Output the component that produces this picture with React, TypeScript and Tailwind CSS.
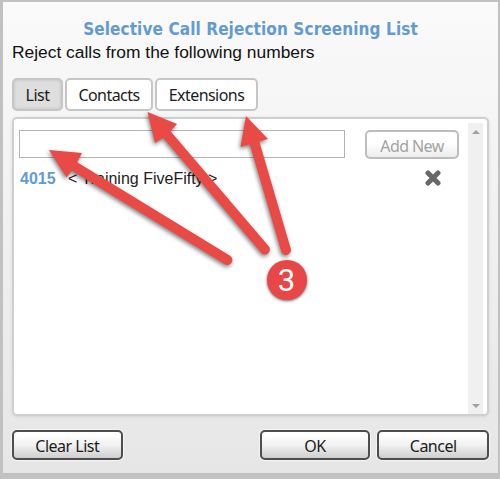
import React from "react";

const UI = "font-['Noto_Sans','Open_Sans',sans-serif]";

function Tab({ label, className }: { label: string; className: string }) {
  return (
    <button
      className={`${UI} flex h-[33px] items-center justify-center rounded-[5px] border-2 border-[#c6c6c6] pt-px text-[16px] leading-none tracking-[-0.55px] whitespace-nowrap text-[#1c1c1c] ${className}`}
    >
      {label}
    </button>
  );
}

function ActionButton({ label, className }: { label: string; className: string }) {
  return (
    <button
      className={`${UI} flex h-[30px] items-center justify-center rounded-[5px] border-2 border-[#4d4d4d] bg-linear-to-b from-white from-10% via-[#f1f1f1] via-50% to-[#cfcfcf] pt-px text-[16px] leading-none tracking-[-0.5px] whitespace-nowrap text-[#1c1c1c] shadow-[0_0_1px_1px_#f5f5f5] ${className}`}
    >
      {label}
    </button>
  );
}

const arrows = [
  { head: "49,150 82,153 77.5,161.5 71.5,171 66.5,177.5", x1: 73, y1: 165.5, x2: 227.5, y2: 260 },
  { head: "147.5,112 177,124 171,130.5 163,138 155,143", x1: 166, y1: 133.5, x2: 265, y2: 249.5 },
  { head: "246,116 268,139 259,141.5 251,144 240.5,147", x1: 254, y1: 141, x2: 286, y2: 250 },
];

function Annotations() {
  return (
    <svg className="pointer-events-none absolute inset-0" width="500" height="479" viewBox="0 0 500 479">
      {arrows.map((a) => (
        <g key={a.head} className="fill-[#e94a45] stroke-[#e94a45] drop-shadow-[-1px_2px_2px_rgba(0,0,0,0.5)]">
          <polygon points={a.head} stroke="none" />
          <line x1={a.x1} y1={a.y1} x2={a.x2} y2={a.y2} strokeWidth="9.8" strokeLinecap="round" />
        </g>
      ))}
    </svg>
  );
}

export default function App() {
  return (
    <div className="relative h-[479px] w-[500px] overflow-hidden bg-[#c1c1c1] pt-[2px] pr-[2px] pb-[6px] pl-[3px]">
      <div className="flex h-[471px] flex-col bg-linear-to-b from-[#fafafa] to-[#e6e6e6] pr-[9px] pl-[9px]">
        <h1 className="mt-[16px] flex h-[22px] items-center justify-center pt-px font-['DejaVu_Sans_Condensed','DejaVu_Sans','Noto_Sans',sans-serif] text-[17px] leading-none font-bold tracking-[0.1px] whitespace-nowrap text-[#639bd1]">
          Selective Call Rejection Screening List
        </h1>
        <p className="flex h-[24px] items-center pt-[2px] font-['Liberation_Sans',Arial,sans-serif] text-[17.4px] leading-none whitespace-nowrap text-[#111]">
          Reject calls from the following numbers
        </p>
        <div className="mt-[14px] flex h-[33px] gap-[2px]">
          <Tab label="List" className="w-[51px] bg-[#dedede] shadow-[inset_0_0_3px_#bbb]" />
          <Tab label="Contacts" className="w-[88px] bg-white" />
          <Tab label="Extensions" className="w-[103px] bg-white" />
        </div>
        <div className="mt-[6px] flex h-[299px] w-[477px] rounded-[5px] border-2 border-[#cfcfcf] bg-white shadow-[0_1px_3px_#d4d4d4]">
          <div className="flex-1 pl-[5px]">
            <div className="mt-[11px] flex items-start">
              <input className="h-[28px] w-[326px] border border-[#b5b5b5] bg-white" />
              <button
                className={`${UI} ml-[20px] flex h-[29px] w-[94px] items-center justify-center rounded-[5px] border-2 border-[#bdbdbd] bg-linear-to-b from-white from-45% to-[#ececec] pt-[2px] text-[16px] leading-none tracking-[-0.6px] whitespace-nowrap text-[#a2a2a2]`}
              >
                Add New
              </button>
            </div>
            <div className="mt-[9px] flex h-[20px] items-center pl-px font-['Liberation_Sans',Arial,sans-serif] text-[16px] leading-none text-[#222]">
              <span className="w-[48px] pt-px text-[16px] font-bold text-[#639bd1]">4015</span>
              <span className="w-[357px] pt-px whitespace-pre">&lt; Training FiveFifty &gt;</span>
              <svg width="16" height="16" viewBox="0 0 16 16">
                <path d="M3 3 13 13M13 3 3 13" fill="none" stroke="#686868" strokeWidth="5" strokeLinecap="round" />
              </svg>
            </div>
          </div>
          <div className="mt-[4px] mr-[4px] flex w-[15px] flex-col items-center justify-between bg-[#f0f0f0] pt-[7px] pb-[6px]">
            <svg width="8" height="4" viewBox="0 0 8 4"><path d="M0 4 4 0 8 4Z" fill="#a0a0a0" /></svg>
            <svg width="8" height="4" viewBox="0 0 8 4"><path d="M0 0 4 4 8 0Z" fill="#a0a0a0" /></svg>
          </div>
        </div>
        <div className="mt-[14px] flex">
          <ActionButton label="Clear List" className="w-[111px]" />
          <ActionButton label="OK" className="ml-[137px] w-[111px]" />
          <ActionButton label="Cancel" className="ml-[7px] w-[112px]" />
        </div>
      </div>
      <Annotations />
      <div className="absolute top-[260px] left-[267px] flex size-[40px] items-center justify-center rounded-full bg-[#e94747] pr-px font-['Roboto',sans-serif] text-[31px] leading-none text-white shadow-[0_1px_3px_rgba(0,0,0,0.6)]">
        3
      </div>
    </div>
  );
}
